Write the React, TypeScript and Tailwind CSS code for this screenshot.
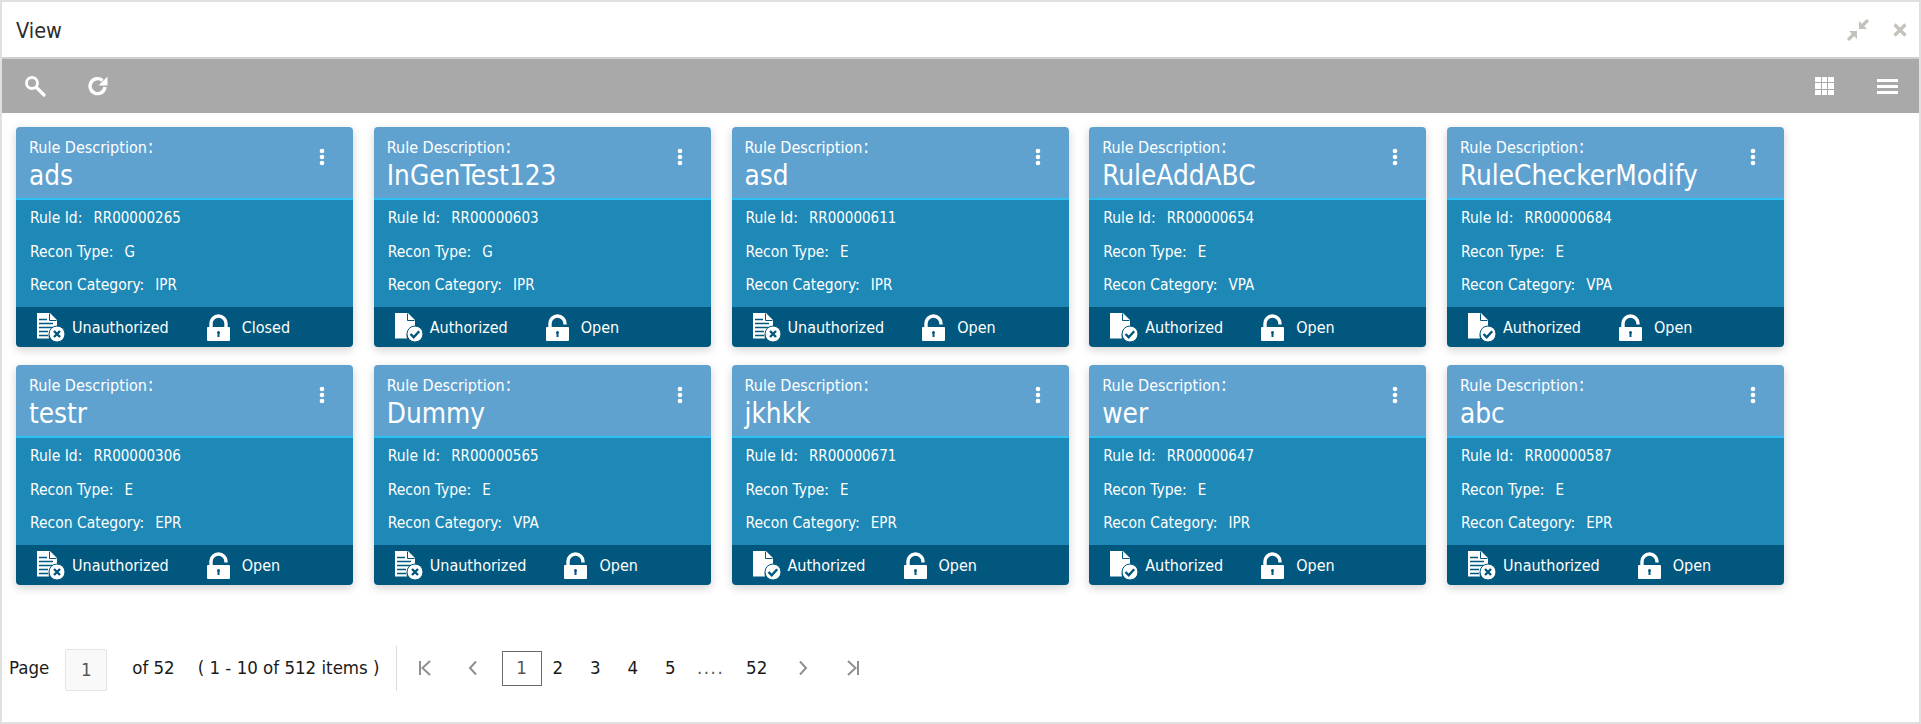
const FONT = "font-['DejaVu_Sans_Condensed','Noto_Sans',sans-serif]";

type CardData = { title: string; id: string; type: string; cat: string; auth: boolean; open: boolean };

const rows: CardData[][] = [
  [
    { title: "ads", id: "RR00000265", type: "G", cat: "IPR", auth: false, open: false },
    { title: "InGenTest123", id: "RR00000603", type: "G", cat: "IPR", auth: true, open: true },
    { title: "asd", id: "RR00000611", type: "E", cat: "IPR", auth: false, open: true },
    { title: "RuleAddABC", id: "RR00000654", type: "E", cat: "VPA", auth: true, open: true },
    { title: "RuleCheckerModify", id: "RR00000684", type: "E", cat: "VPA", auth: true, open: true },
  ],
  [
    { title: "testr", id: "RR00000306", type: "E", cat: "EPR", auth: false, open: true },
    { title: "Dummy", id: "RR00000565", type: "E", cat: "VPA", auth: false, open: true },
    { title: "jkhkk", id: "RR00000671", type: "E", cat: "EPR", auth: true, open: true },
    { title: "wer", id: "RR00000647", type: "E", cat: "IPR", auth: true, open: true },
    { title: "abc", id: "RR00000587", type: "E", cat: "EPR", auth: false, open: true },
  ],
];

function DocIcon({ auth }: { auth: boolean }) {
  return (
    <svg width="30" height="30" viewBox="0 0 30 30" className="shrink-0">
      <path d="M1 1h13l7 7v8a8 8 0 0 0-8 10.500H1z" fill="#fff" />
      <path d="M13.500 1.500v7h7" fill="none" stroke="#01577e" strokeWidth="1" />
      {!auth && (
        <g stroke="#01577e" strokeWidth="1.4">
          <path d="M3 7.500h8M3 11.500h14M3 15.500h14M3 19.500h9M3 23.500h9" />
        </g>
      )}
      <circle cx="21" cy="22" r="8" fill="#fff" stroke="#01577e" strokeWidth="1" />
      {auth ? (
        <path d="M16.500 22l3.200 3.200 5.500-6" fill="none" stroke="#01577e" strokeWidth="2.400" />
      ) : (
        <path d="M18 19l6 6M24 19l-6 6" fill="none" stroke="#01577e" strokeWidth="2.400" />
      )}
    </svg>
  );
}

function LockIcon({ open }: { open: boolean }) {
  return (
    <svg width="23" height="27" viewBox="0 0 23 27" className="shrink-0">
      {open ? (
        <path d="M4 13V9.500a7.500 7.500 0 0 1 15 0v1" fill="none" stroke="#fff" strokeWidth="3.400" />
      ) : (
        <path d="M4 13V9.500a7.500 7.500 0 0 1 15 0V13" fill="none" stroke="#fff" strokeWidth="3.400" />
      )}
      <path
        fillRule="evenodd"
        d="M1 13h21a1 1 0 0 1 1 1v12a1 1 0 0 1-1 1H1a1 1 0 0 1-1-1V14a1 1 0 0 1 1-1zM10 18.500a1.500 1.500 0 1 1 3 0c0 .5-.2.9-.5 1.200V23h-2v-3.300c-.3-.3-.5-.7-.5-1.200z"
        fill="#fff"
      />
    </svg>
  );
}

function Card({ c }: { c: CardData }) {
  return (
    <div className="w-[337px] h-[220px] rounded-[4px] overflow-hidden flex flex-col shrink-0 shadow-[0_3px_10px_rgba(0,0,0,0.18)] text-white">
      <div className="h-[73px] bg-[#5fa2d0] border-b-2 border-[#2cc0f5] flex justify-between pl-[13px] pr-[28px] shrink-0">
        <div className="flex flex-col pt-[10px]">
          <span className="text-[16px] leading-[22px] flex items-baseline">
            Rule Description<span className="text-[19px] leading-none ml-[1px]">:</span>
          </span>
          <span className="text-[27.700px] leading-[32px] mt-[1px]">{c.title}</span>
        </div>
        <svg width="6" height="18" viewBox="0 0 6 18" className="mt-[21px]">
          <circle cx="3" cy="3" r="2.300" fill="#fff" />
          <circle cx="3" cy="9" r="2.300" fill="#fff" />
          <circle cx="3" cy="15" r="2.300" fill="#fff" />
        </svg>
      </div>
      <div className="flex-1 bg-[#1e88b6] flex flex-col pl-[14px] pt-[2px] text-[15.500px] leading-[33.500px]">
        <div className="flex gap-[11px]"><span>Rule Id:</span><span className="text-[15px]">{c.id}</span></div>
        <div className="flex gap-[11px]"><span>Recon Type:</span><span className="text-[15px]">{c.type}</span></div>
        <div className="flex gap-[11px]"><span>Recon Category:</span><span className="text-[15px]">{c.cat}</span></div>
      </div>
      <div className="h-[40px] bg-[#01577e] flex items-center pl-[20px] text-[16px] shrink-0">
        <div className="flex items-center gap-[6px]">
          <DocIcon auth={c.auth} />
          <span className="pt-[1px]">{c.auth ? "Authorized" : "Unauthorized"}</span>
        </div>
        <div className="flex items-center gap-[12px] ml-[38px]">
          <LockIcon open={c.open} />
          <span className="pt-[1px]">{c.open ? "Open" : "Closed"}</span>
        </div>
      </div>
    </div>
  );
}

function PageNav({ d }: { d: string }) {
  return (
    <svg width="14" height="16" viewBox="0 0 14 16" className="shrink-0">
      <path d={d} fill="none" stroke="#909090" strokeWidth="2" />
    </svg>
  );
}

export default function App() {
  return (
    <div className={`${FONT} w-[1921px] h-[724px] border-2 border-[#e0e0e0] bg-white flex flex-col overflow-hidden`}>
      <div className="h-[55px] flex items-center justify-between pl-[14px] pr-[12px] border-b-2 border-[#d0d0d0] shrink-0 box-content">
        <span className="text-[21.500px] text-[#2c2c2c] mt-[3px]">View</span>
        <div className="flex items-center gap-[24px]">
          <svg width="22" height="22" viewBox="0 0 22 22">
            <path d="M12 2v8h8zM10 20v-8H2z" fill="#c5c1bb" />
            <path d="M15 7l6-6M7 15l-6 6" stroke="#c5c1bb" strokeWidth="3.200" fill="none" />
          </svg>
          <svg width="14" height="14" viewBox="0 0 14 14">
            <path d="M1.500 1.500l11 11M12.500 1.500l-11 11" stroke="#c5c1bb" strokeWidth="3.200" fill="none" />
          </svg>
        </div>
      </div>
      <div className="h-[54px] bg-[#a9a9a9] flex items-center justify-between pl-[22px] pr-[21px] shrink-0">
        <div className="flex items-center gap-[41px]">
          <svg width="22" height="22" viewBox="0 0 22 22">
            <circle cx="8" cy="8" r="5.500" fill="none" stroke="#fff" strokeWidth="2.800" />
            <path d="M12.500 12.500L20 20" stroke="#fff" strokeWidth="3.200" strokeLinecap="round" />
          </svg>
          <svg width="22" height="22" viewBox="0 0 22 22">
            <path d="M18 12a7.500 7.500 0 1 1-2.500-6.500" fill="none" stroke="#fff" strokeWidth="3.400" />
            <path d="M20.500 1.500v9h-9z" fill="#fff" />
          </svg>
        </div>
        <div className="flex items-center gap-[43px]">
          <div className="w-[19px] h-[19px] grid grid-cols-3 grid-rows-3 gap-[1px]">
            {Array.from({ length: 9 }).map((_, i) => (
              <div key={i} className="bg-white" />
            ))}
          </div>
          <div className="w-[21px] flex flex-col gap-[3px]">
            <div className="h-[3px] bg-white" />
            <div className="h-[3px] bg-white" />
            <div className="h-[3px] bg-white" />
          </div>
        </div>
      </div>
      <div className="flex flex-col gap-[18px] pt-[14px] pl-[14px] shrink-0">
        {rows.map((r, i) => (
          <div key={i} className="flex gap-[20.750px]">
            {r.map((c) => (
              <Card key={c.id} c={c} />
            ))}
          </div>
        ))}
      </div>
      <div className="flex items-center mt-[60px] text-[18.500px] text-[#1a1a1a] pl-[7px]">
        <span>Page</span>
        <div className="w-[42px] h-[42px] ml-[16px] mt-[4px] flex items-center justify-center bg-[#f9f9f9] border border-[#e4e4e4] rounded-[2px] text-[#555]">1</div>
        <span className="ml-[25px]">of 52</span>
        <span className="ml-[23px]">( 1 - 10 of 512 items )</span>
        <div className="w-px h-[45px] bg-[#dcdcdc] ml-[16px]" />
        <div className="ml-[21px]"><PageNav d="M2 1v14M12 1L4.500 8 12 15" /></div>
        <div className="ml-[34px]"><PageNav d="M10 1.500L4 8l6 6.500" /></div>
        <div className="ml-[22px] w-[40px] h-[35px] flex items-center justify-center border border-[#6a6a6a] text-[#555]">1</div>
        <div className="ml-[11px] w-[9px]">2</div>
        <div className="ml-[28.500px] w-[9px]">3</div>
        <div className="ml-[28.500px] w-[9px]">4</div>
        <div className="ml-[28.500px] w-[9px]">5</div>
        <div className="ml-[23px] w-[26px] text-[#555] tracking-[1.500px]">....</div>
        <div className="ml-[23px] w-[19px]">52</div>
        <div className="ml-[31px]"><PageNav d="M4 1.500L10 8l-6 6.500" /></div>
        <div className="ml-[36px]"><PageNav d="M2 1l7.500 7L2 15M12 1v14" /></div>
      </div>
    </div>
  );
}
